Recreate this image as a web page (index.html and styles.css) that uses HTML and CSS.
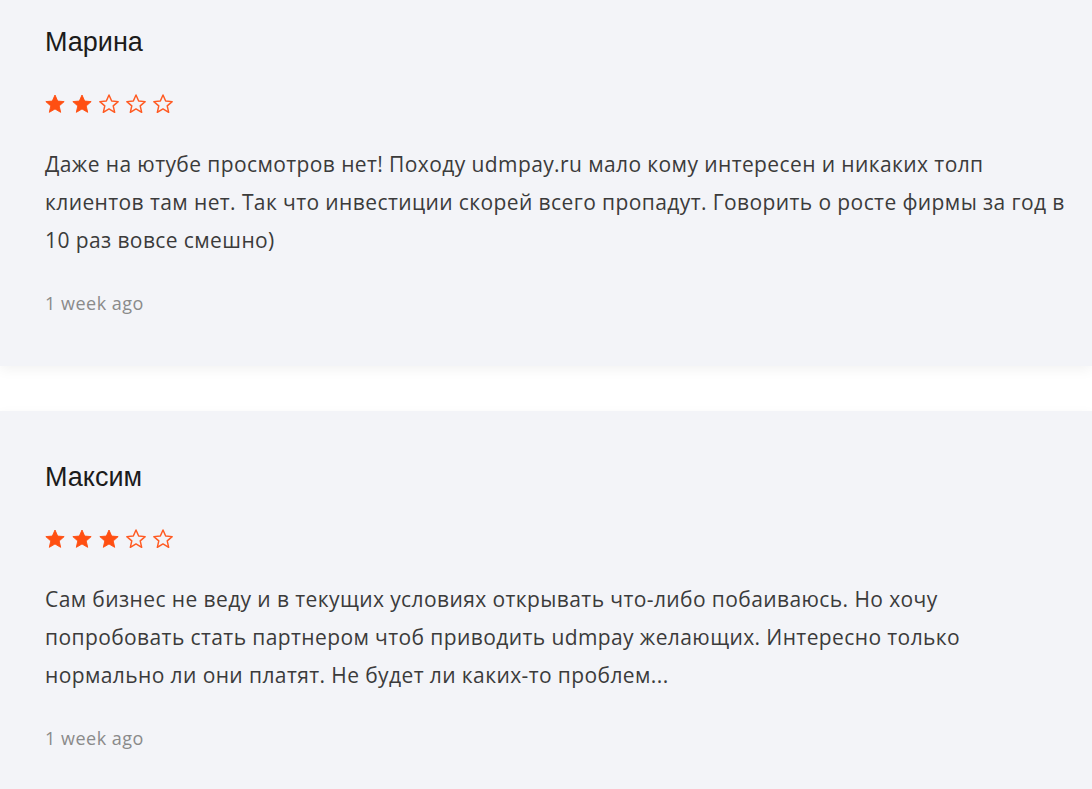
FILE: index.html
```html
<!DOCTYPE html>
<html lang="ru">
<head>
<meta charset="utf-8">
<link rel="stylesheet" href="styles.css">
</head>
<body>
<div class="reviews">
  <div class="review">
    <div class="name">Марина</div>
    <div class="stars">
      <svg class="star" viewBox="0 0 24 24"><path class="full" d="M12 2.2l2.9 6.6 7.1.6-5.4 4.7 1.6 7-6.2-3.7-6.2 3.7 1.6-7L2 9.4l7.1-.6z"/></svg>
      <svg class="star" viewBox="0 0 24 24"><path class="full" d="M12 2.2l2.9 6.6 7.1.6-5.4 4.7 1.6 7-6.2-3.7-6.2 3.7 1.6-7L2 9.4l7.1-.6z"/></svg>
      <svg class="star" viewBox="0 0 24 24"><path class="empty" d="M12 2.2l2.9 6.6 7.1.6-5.4 4.7 1.6 7-6.2-3.7-6.2 3.7 1.6-7L2 9.4l7.1-.6z"/></svg>
      <svg class="star" viewBox="0 0 24 24"><path class="empty" d="M12 2.2l2.9 6.6 7.1.6-5.4 4.7 1.6 7-6.2-3.7-6.2 3.7 1.6-7L2 9.4l7.1-.6z"/></svg>
      <svg class="star" viewBox="0 0 24 24"><path class="empty" d="M12 2.2l2.9 6.6 7.1.6-5.4 4.7 1.6 7-6.2-3.7-6.2 3.7 1.6-7L2 9.4l7.1-.6z"/></svg>
    </div>
    <p class="text">Даже на ютубе просмотров нет! Походу udmpay.ru мало кому интересен и никаких толп клиентов там нет. Так что инвестиции скорей всего пропадут. Говорить о росте фирмы за год в 10 раз вовсе смешно)</p>
    <div class="date">1 week ago</div>
  </div>
  <div class="review">
    <div class="name">Максим</div>
    <div class="stars">
      <svg class="star" viewBox="0 0 24 24"><path class="full" d="M12 2.2l2.9 6.6 7.1.6-5.4 4.7 1.6 7-6.2-3.7-6.2 3.7 1.6-7L2 9.4l7.1-.6z"/></svg>
      <svg class="star" viewBox="0 0 24 24"><path class="full" d="M12 2.2l2.9 6.6 7.1.6-5.4 4.7 1.6 7-6.2-3.7-6.2 3.7 1.6-7L2 9.4l7.1-.6z"/></svg>
      <svg class="star" viewBox="0 0 24 24"><path class="full" d="M12 2.2l2.9 6.6 7.1.6-5.4 4.7 1.6 7-6.2-3.7-6.2 3.7 1.6-7L2 9.4l7.1-.6z"/></svg>
      <svg class="star" viewBox="0 0 24 24"><path class="empty" d="M12 2.2l2.9 6.6 7.1.6-5.4 4.7 1.6 7-6.2-3.7-6.2 3.7 1.6-7L2 9.4l7.1-.6z"/></svg>
      <svg class="star" viewBox="0 0 24 24"><path class="empty" d="M12 2.2l2.9 6.6 7.1.6-5.4 4.7 1.6 7-6.2-3.7-6.2 3.7 1.6-7L2 9.4l7.1-.6z"/></svg>
    </div>
    <p class="text">Сам бизнес не веду и в текущих условиях открывать что-либо побаиваюсь. Но хочу попробовать стать партнером чтоб приводить udmpay желающих. Интересно только нормально ли они платят. Не будет ли каких-то проблем...</p>
    <div class="date">1 week ago</div>
  </div>
</div>
</body>
</html>
```
FILE: styles.css
```css
html, body {
  margin: 0;
  padding: 0;
  background: #ffffff;
  overflow: hidden;
}
body {
  font-family: "Open Sans", "Liberation Sans", sans-serif;
}
.reviews {
  display: flex;
  flex-direction: column;
  gap: 45px;
  margin-top: -24px;
}
.review {
  background: #f3f4f8;
  box-shadow: 0 4px 12px rgba(0, 0, 0, 0.05);
  padding: 51px 14px 53px 45px;
  height: 390px;
  box-sizing: border-box;
}
.name {
  font-family: "Liberation Sans", Arial, sans-serif;
  font-size: 27px;
  line-height: 30px;
  color: #1b1b1b;
}
.stars {
  display: flex;
  gap: 5px;
  margin-top: 36px;
  height: 20px;
  margin-left: -1px;
}
.star {
  width: 22px;
  height: 22px;
}
.star .full {
  fill: #ff4f12;
  stroke: #ff4f12;
  stroke-width: 1;
  stroke-linejoin: round;
}
.star .empty {
  fill: none;
  stroke: #ff5a22;
  stroke-width: 1.6;
  stroke-linejoin: round;
}
.text {
  margin: 32px 0 0;
  font-size: 21px;
  letter-spacing: 0.4px;
  line-height: 38px;
  color: #3b3b3b;
}
.date {
  margin-top: 34px;
  font-size: 18px;
  letter-spacing: 0.5px;
  line-height: 20px;
  color: #8a8a8a;
}
```
